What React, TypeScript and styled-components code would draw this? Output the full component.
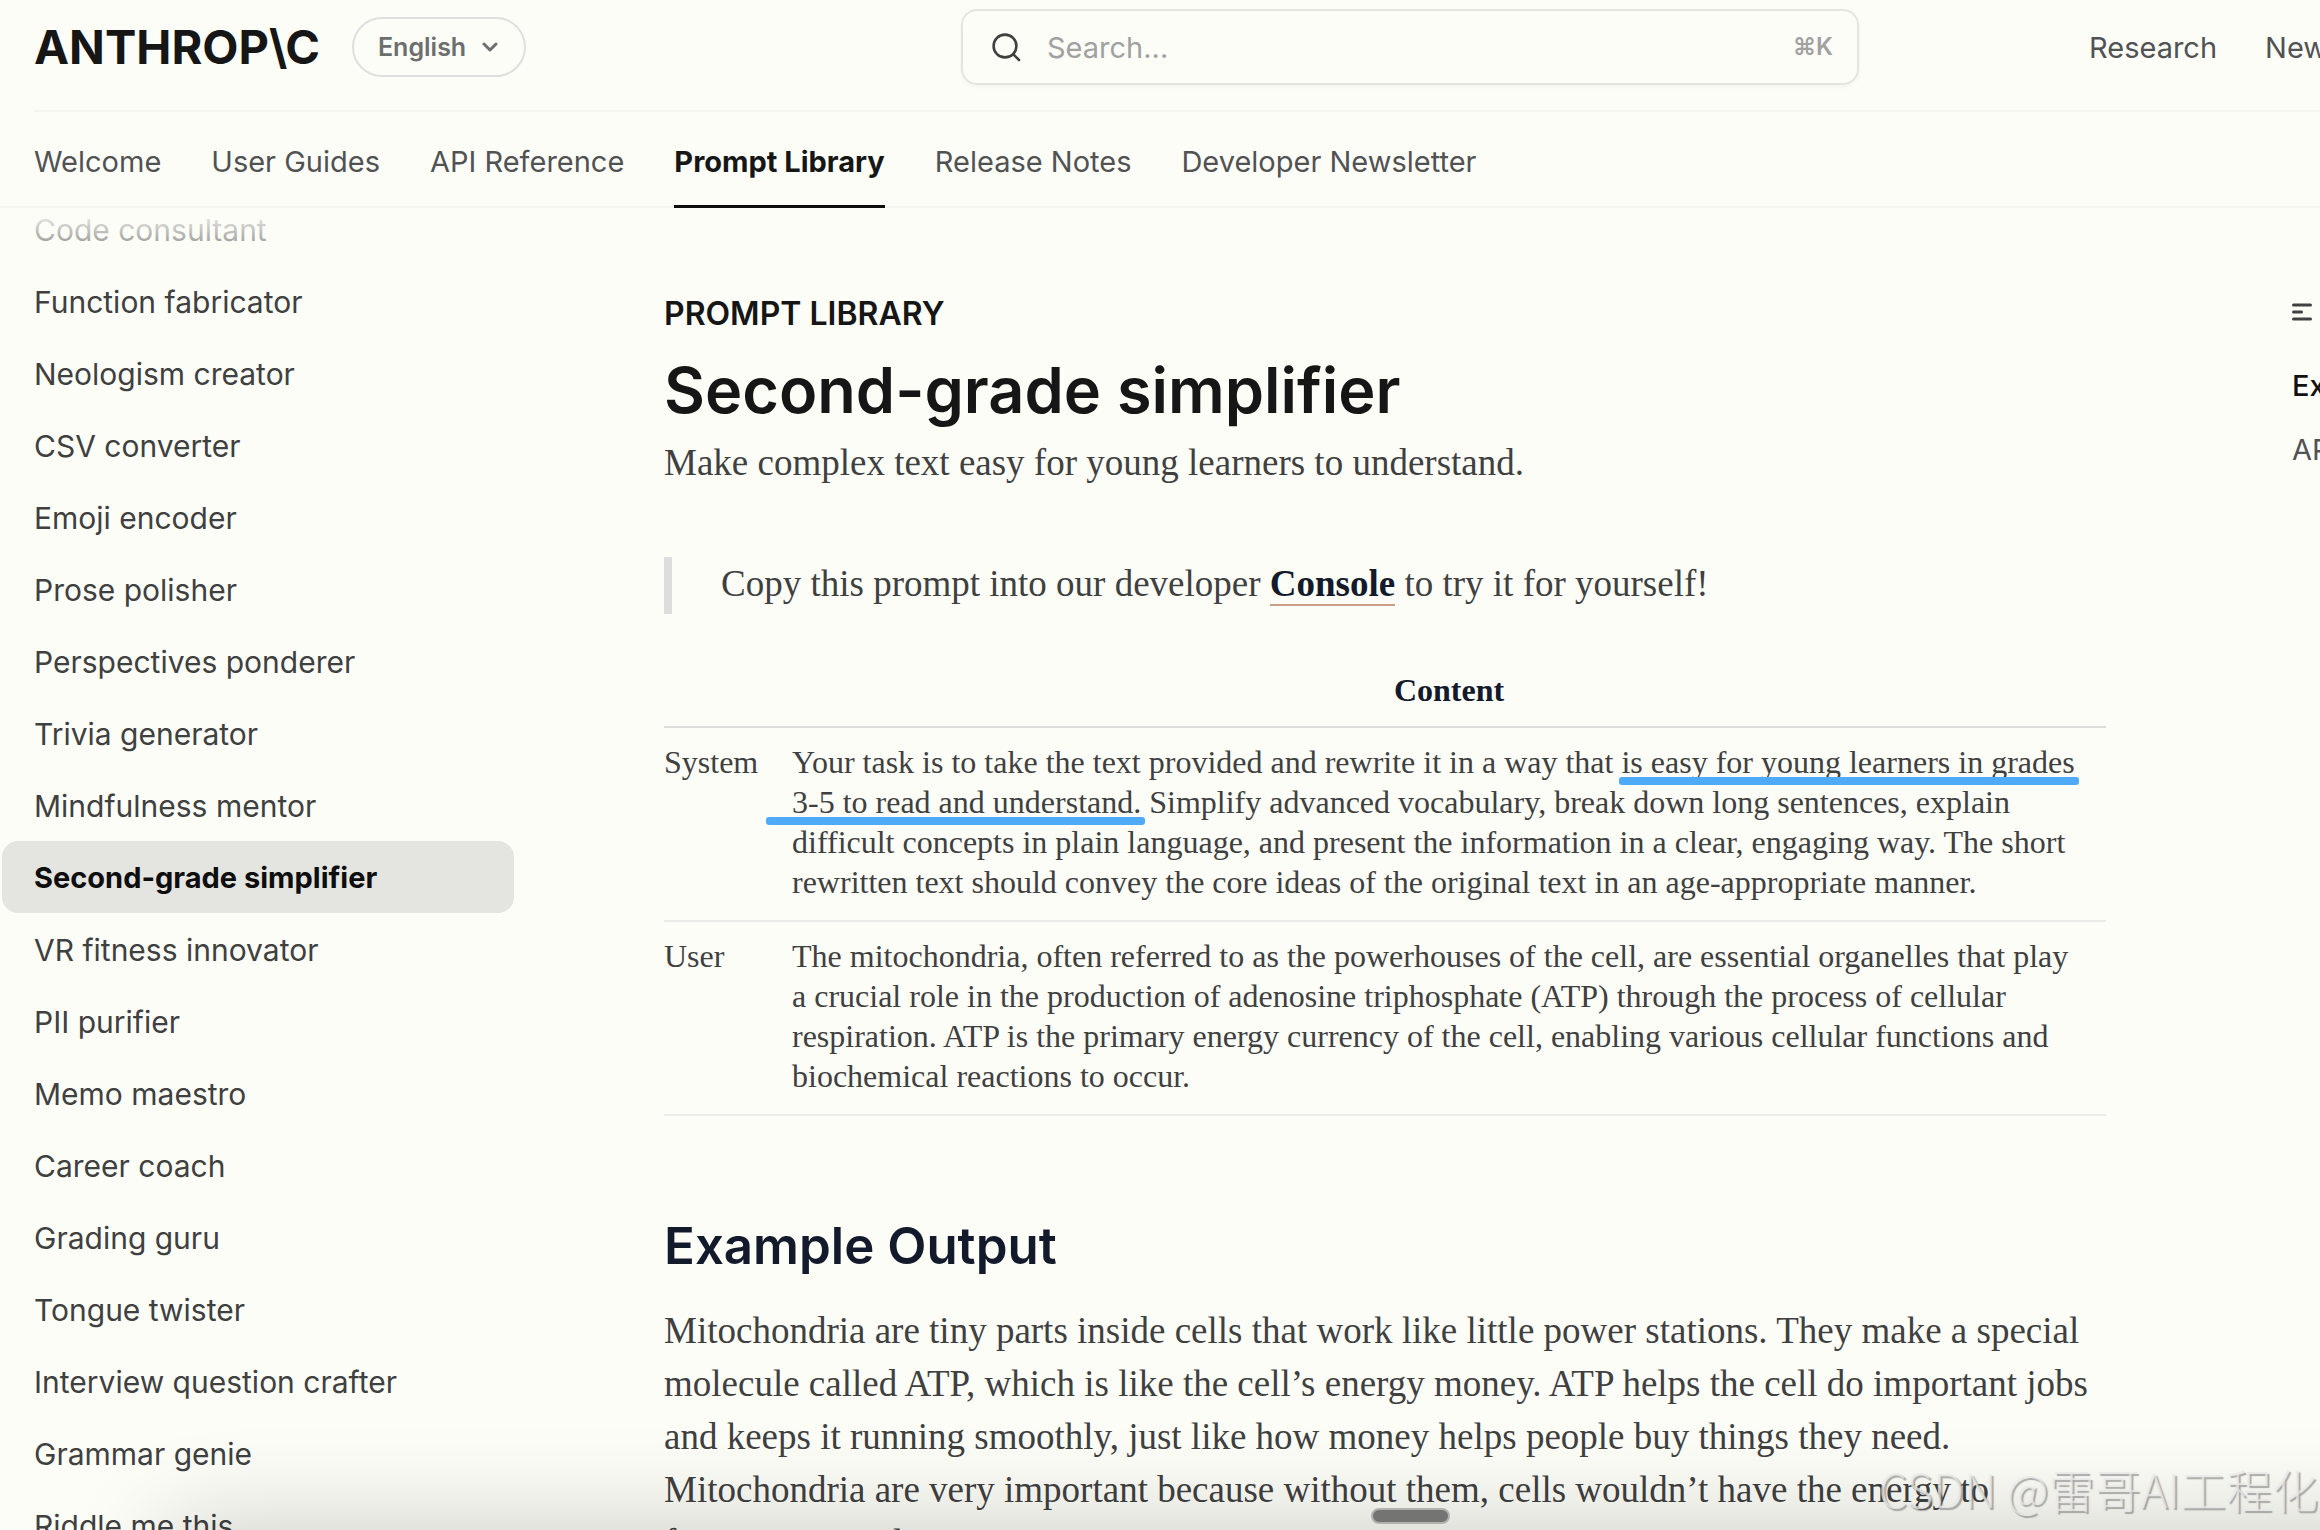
import React from "react";
import styled, { createGlobalStyle, css } from "styled-components";

const sans = `Inter, "Noto Sans", "DejaVu Sans", sans-serif`;
const serif = `"Liberation Serif", "Times New Roman", serif`;

const color = {
  page: "#fdfdf8",
  hairline: "#f4f5f1",
  ink: "#161616",
  navy: "#131a2b",
  text: "#3f4040",
  muted: "#515253",
  marker: "#4fabf9",
};

const GlobalStyle = createGlobalStyle`
  *, *::before, *::after { box-sizing: border-box; }
  html, body { margin: 0; height: 100%; background: ${color.page}; }
  body { overflow: hidden; font-family: ${sans}; color: ${color.text}; }
  a { color: inherit; text-decoration: none; }
  h1, h2, p, ul, blockquote { margin: 0; padding: 0; }
  ul { list-style: none; }
`;

const Page = styled.div`
  position: relative;
  display: flex;
  flex-direction: column;
  height: 100vh;
  overflow: hidden;
`;

/* ---------- Header ---------- */

const Header = styled.header`
  flex: none;
  border-bottom: 2px solid ${color.hairline};
`;

const TopBar = styled.div`
  display: flex;
  align-items: center;
  height: 112px;
  margin-left: 34px;
  padding-bottom: 16px;
  border-bottom: 2px solid ${color.hairline};
  white-space: nowrap;
  overflow: hidden;
`;

const Brand = styled.div`
  display: flex;
  flex: 1 0 927px;
  align-items: center;
  gap: 32px;
`;

const Logo = styled.a`
  && { color: ${color.ink}; }
  font-size: 47px;
  line-height: 60px;
  font-weight: 700;
`;

const LanguageButton = styled.button`
  display: flex;
  align-items: center;
  gap: 16px;
  height: 60px;
  padding: 0 26px 0 24px;
  border: 2px solid #dedfde;
  border-radius: 30px;
  background: transparent;
  color: #6d6e6e;
  font: 600 25px/32px ${sans};
`;

const SearchBox = styled.label`
  display: flex;
  flex: 0 0 898px;
  align-items: center;
  gap: 26px;
  height: 76px;
  padding: 0 24px 0 28px;
  border: 2px solid #e4e5e1;
  border-radius: 16px;
  box-shadow: 0 2px 4px rgba(0, 0, 0, 0.04);
  color: ${color.text};
`;

const SearchInput = styled.input`
  flex: 1;
  min-width: 0;
  padding: 2px 0 0;
  border: 0;
  outline: 0;
  background: transparent;
  font: 400 29px/40px ${sans};
  &::placeholder { color: #a0a1a0; opacity: 1; }
`;

const Shortcut = styled.kbd`
  color: #a0a1a0;
  font: 600 24px/32px ${sans};
`;

const TopLinks = styled.nav`
  display: flex;
  flex: 1 0 461px;
  gap: 48px;
  width: 0;
  padding: 2px 0 0 230px;
  overflow: hidden;
  color: ${color.muted};
  font-size: 29px;
  line-height: 40px;
`;

const Tabs = styled.nav`
  display: flex;
  gap: 50px;
  height: 94px;
  padding-left: 34px;
  white-space: nowrap;
`;

const Tab = styled.a<{ $active?: boolean }>`
  && { color: ${(p) => (p.$active ? color.ink : color.muted)}; }
  height: 96px;
  padding: 30px 0 23px;
  border-bottom: 3px solid ${(p) => (p.$active ? "#0e0e0e" : "transparent")};
  font-size: 29px;
  line-height: 40px;
  font-weight: ${(p) => (p.$active ? 700 : 400)};
`;

/* ---------- Body ---------- */

const Body = styled.div`
  position: relative;
  display: flex;
  flex: 1;
  min-height: 0;
  overflow: hidden;
`;

const Sidebar = styled.nav`
  position: relative;
  flex: 0 0 514px;
  padding-left: 2px;
  overflow: hidden;
  &::before {
    content: "";
    position: absolute;
    inset: 0 0 auto 0;
    height: 72px;
    background: linear-gradient(${color.page}, rgba(253, 253, 248, 0));
  }
`;

const SideList = styled.ul`
  margin-top: -15px;
`;

const SideLink = styled.a<{ $active?: boolean }>`
  display: block;
  padding: 17px 32px 15px;
  border-radius: 16px;
  font-size: 30px;
  line-height: 40px;
  white-space: nowrap;
  ${(p) =>
    p.$active &&
    css`
      && { color: #0e0e0e; }
      background: #e4e5e0;
      font-size: 29px;
      font-weight: 700;
    `}
`;

const Article = styled.main`
  flex: 1 1 1442px;
  max-width: 1442px;
  margin-left: 150px;
  padding-top: 86px;
  font-family: ${serif};
  font-size: 37px;
  line-height: 53px;
`;

const Eyebrow = styled.p`
  color: ${color.ink};
  font: 600 32px/40px ${sans};
`;

const Title = styled.h1`
  margin-top: 18px;
  color: ${color.ink};
  font: 600 63px/76px ${sans};
`;

const Lead = styled.p`
  margin-top: 8px;
`;

const Callout = styled.blockquote`
  margin-top: 68px;
  padding: 0 0 4px 49px;
  border-left: 8px solid #dddddd;
`;

const ConsoleLink = styled.a`
  && { color: ${color.navy}; }
  border-bottom: 2px solid #cc9f84;
  font-weight: 700;
`;

const PromptTable = styled.table`
  width: 100%;
  margin-top: 56px;
  border-collapse: separate;
  border-spacing: 0;
  font-size: 32px;
  line-height: 40px;
  th, td { padding: 14px 0 18px; text-align: left; vertical-align: top; }
  tbody th, tbody td { border-bottom: 2px solid #ebecea; }
  tbody th { width: 128px; font-weight: 400; white-space: nowrap; }
  thead th, thead td { padding: 0 0 16px; border-bottom: 2px solid #dcdddd; }
  thead th { color: ${color.navy}; font-weight: 700; text-align: center; }
`;

const Marked = styled.span<{ $lead: number }>`
  position: relative;
  white-space: nowrap;
  &::after {
    content: "";
    position: absolute;
    left: ${(p) => -p.$lead}px;
    right: -4px;
    bottom: -5px;
    height: 8px;
    border-radius: 3px;
    background: ${color.marker};
  }
`;

const Section = styled.h2`
  margin-top: 98px;
  color: ${color.navy};
  font: 600 51px/64px ${sans};
`;

const Answer = styled.p`
  margin-top: 26px;
`;

const Toc = styled.aside`
  flex: 1 0 28px;
  width: 0;
  margin-left: 186px;
  padding-top: 84px;
  overflow: hidden;
  white-space: nowrap;
  font-size: 29px;
  line-height: 40px;
`;

const TocHeading = styled.div`
  display: flex;
  align-items: center;
  gap: 20px;
  height: 40px;
  margin-bottom: 34px;
  svg { flex: none; }
`;

const TocLink = styled.a<{ $active?: boolean }>`
  display: block;
  margin-bottom: 24px;
  && { color: ${(p) => (p.$active ? "#111111" : color.muted)}; }
  font-weight: ${(p) => (p.$active ? 500 : 400)};
`;

/* ---------- Overlays ---------- */

const DockShadow = styled.div`
  position: absolute;
  top: 100%;
  left: 170px;
  right: -200px;
  height: 300px;
  box-shadow: 0 0 100px rgba(20, 20, 20, 0.22);
  pointer-events: none;
`;

const Handle = styled.div`
  position: absolute;
  bottom: 6px;
  left: 1371px;
  width: 79px;
  height: 16px;
  border: 2px solid #b1b2af;
  border-radius: 8px;
  background: #747573;
`;

const Watermark = styled.div`
  position: absolute;
  right: 2px;
  bottom: 12px;
  color: rgba(232, 233, 232, 0.75);
  font: 300 46px/60px "Noto Sans CJK SC", sans-serif;
  text-shadow: 2px 2px 1px rgba(120, 120, 120, 0.6);
  white-space: nowrap;
`;

const tabs = ["Welcome", "User Guides", "API Reference", "Prompt Library", "Release Notes", "Developer Newsletter"];

const prompts = [
  "Code consultant",
  "Function fabricator",
  "Neologism creator",
  "CSV converter",
  "Emoji encoder",
  "Prose polisher",
  "Perspectives ponderer",
  "Trivia generator",
  "Mindfulness mentor",
  "Second-grade simplifier",
  "VR fitness innovator",
  "PII purifier",
  "Memo maestro",
  "Career coach",
  "Grading guru",
  "Tongue twister",
  "Interview question crafter",
  "Grammar genie",
  "Riddle me this",
];

const ChevronIcon = () => (
  <svg width="16" height="10" viewBox="0 0 16 10" fill="none" stroke="currentColor" strokeWidth="3" strokeLinecap="round" strokeLinejoin="round" aria-hidden="true">
    <path d="M2 2l6 6 6-6" />
  </svg>
);

const SearchIcon = () => (
  <svg width="30" height="30" viewBox="0 0 30 30" fill="none" stroke="currentColor" strokeWidth="2.6" strokeLinecap="round" aria-hidden="true">
    <circle cx="14" cy="14" r="11.4" />
    <path d="M22.4 22.4L28 28" />
  </svg>
);

const ListIcon = () => (
  <svg width="20" height="18" viewBox="0 0 20 18" stroke="#404141" strokeWidth="3" strokeLinecap="round" aria-hidden="true">
    <path d="M1.5 2h17M1.5 9h8M1.5 16h17" />
  </svg>
);

export default function App() {
  return (
    <Page>
      <GlobalStyle />
      <Header>
        <TopBar>
          <Brand>
            <Logo href="#">ANTHROP\C</Logo>
            <LanguageButton type="button" aria-haspopup="menu">
              English
              <ChevronIcon />
            </LanguageButton>
          </Brand>
          <SearchBox>
            <SearchIcon />
            <SearchInput type="text" placeholder="Search..." aria-label="Search" />
            <Shortcut>⌘K</Shortcut>
          </SearchBox>
          <TopLinks>
            <a href="#">Research</a>
            <a href="#">News</a>
          </TopLinks>
        </TopBar>
        <Tabs>
          {tabs.map((name) => (
            <Tab key={name} href="#" $active={name === "Prompt Library"}>
              {name}
            </Tab>
          ))}
        </Tabs>
      </Header>

      <Body>
        <Sidebar>
          <SideList>
            {prompts.map((name) => (
              <li key={name}>
                <SideLink href="#" $active={name === "Second-grade simplifier"}>
                  {name}
                </SideLink>
              </li>
            ))}
          </SideList>
        </Sidebar>

        <Article>
          <Eyebrow>PROMPT LIBRARY</Eyebrow>
          <Title>Second-grade simplifier</Title>
          <Lead>Make complex text easy for young learners to understand.</Lead>
          <Callout>
            Copy this prompt into our developer <ConsoleLink href="#">Console</ConsoleLink> to try it for yourself!
          </Callout>

          <PromptTable>
            <thead>
              <tr>
                <td />
                <th scope="col">Content</th>
              </tr>
            </thead>
            <tbody>
              <tr>
                <th scope="row">System</th>
                <td>
                  Your task is to take the text provided and rewrite it in a way that{" "}
                  <Marked $lead={2}>is easy for young learners in grades</Marked>
                  <br />
                  <Marked $lead={26}>3-5 to read and understand.</Marked> Simplify advanced vocabulary, break down long
                  sentences, explain
                  <br />
                  difficult concepts in plain language, and present the information in a clear, engaging way. The short
                  <br />
                  rewritten text should convey the core ideas of the original text in an age-appropriate manner.
                </td>
              </tr>
              <tr>
                <th scope="row">User</th>
                <td>
                  The mitochondria, often referred to as the powerhouses of the cell, are essential organelles that play
                  <br />
                  a crucial role in the production of adenosine triphosphate (ATP) through the process of cellular
                  <br />
                  respiration. ATP is the primary energy currency of the cell, enabling various cellular functions and
                  <br />
                  biochemical reactions to occur.
                </td>
              </tr>
            </tbody>
          </PromptTable>

          <Section>Example Output</Section>
          <Answer>
            Mitochondria are tiny parts inside cells that work like little power stations. They make a special molecule
            called ATP, which is like the cell’s energy money. ATP helps the cell do important jobs and keeps it running
            smoothly, just like how money helps people buy things they need. Mitochondria are very important because
            without them, cells wouldn’t have the energy to function properly.
          </Answer>
        </Article>

        <Toc>
          <TocHeading>
            <ListIcon />
          </TocHeading>
          <TocLink href="#" $active>
            Example Output
          </TocLink>
          <TocLink href="#">API Request</TocLink>
        </Toc>
      </Body>

      <DockShadow />
      <Handle />
      <Watermark>CSDN @雷哥AI工程化</Watermark>
    </Page>
  );
}
